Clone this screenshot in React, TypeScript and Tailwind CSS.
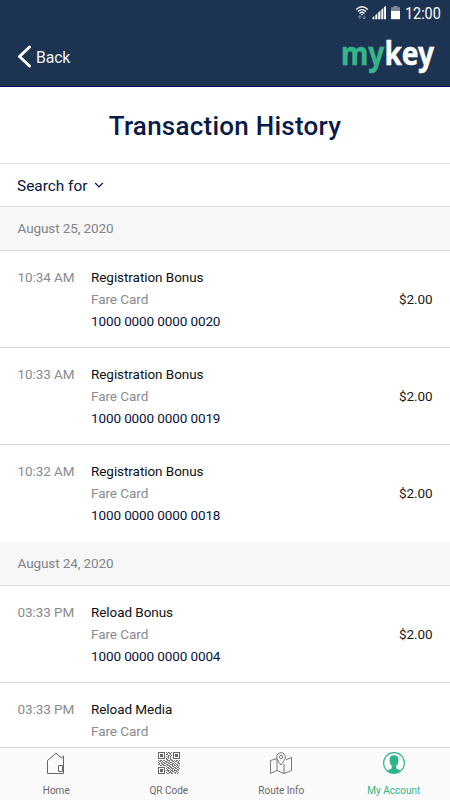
import React from "react";

type Entry = { time: string; title: string; card?: string; amount?: string };

const august25: Entry[] = [
  { time: "10:34 AM", title: "Registration Bonus", card: "1000 0000 0000 0020", amount: "$2.00" },
  { time: "10:33 AM", title: "Registration Bonus", card: "1000 0000 0000 0019", amount: "$2.00" },
  { time: "10:32 AM", title: "Registration Bonus", card: "1000 0000 0000 0018", amount: "$2.00" },
];
const august24: Entry[] = [
  { time: "03:33 PM", title: "Reload Bonus", card: "1000 0000 0000 0004", amount: "$2.00" },
  { time: "03:33 PM", title: "Reload Media" },
];

function StatusIcons() {
  return (
    <svg width="46" height="16" viewBox="0 0 46 16" fill="none">
      <g stroke="#fff" strokeWidth="1.3">
        <path d="M1.2 4.4Q7-1 12.8 4.4" />
        <path d="M2.9 6.5Q7 2.7 11.1 6.5" />
        <path d="M4.5 8.5Q7 6 9.5 8.5" />
      </g>
      <path d="M5.8 9h2.4L7 10.6z" fill="#fff" />
      <path d="M4.8 14V10.5M3.3 12l1.5-1.5L6.3 12M9.2 10.5V14M7.7 12.5 9.2 14l1.5-1.5" stroke="#8290a3" strokeWidth="1" />
      <path d="M17.5 14.2v-1.7l1.8-1.5v3.2zM20.3 14.2v-4l2-1.8v5.8zM23.2 14.2V7.6l2.2-2v8.6zM26.3 14.2V4.8l2-1.8v11.2zM29.1 14.2V2.3L31 .8v13.4z" fill="#fff" />
      <path d="M38.5 1h4v1.2H45V7h-9V2.2h2.5z" fill="#7d8999" />
      <path d="M36 6h9v8.2h-9z" fill="#fff" />
    </svg>
  );
}

function Logo() {
  return (
    <svg width="96" height="46" viewBox="0 0 96 46" className="overflow-visible font-bold">
      <text x="1" y="27.6" fontFamily="Noto Sans, sans-serif" fontSize="31.5" textLength="93" lengthAdjust="spacingAndGlyphs" fill="#37b58a" stroke="#37b58a" strokeWidth="0.5">
        my<tspan fill="#fff" stroke="#fff">key</tspan>
      </text>
    </svg>
  );
}

function HomeIcon() {
  return (
    <svg width="24" height="24" viewBox="0 0 24 24" fill="none" stroke="#666" strokeWidth="1">
      <path d="M3.5 22.5V9.5L12 2.2l5.200 4.600 2.300-1.600v17.300z" />
      <path d="M14.5 14.5h4v6h-4z" />
    </svg>
  );
}

const qrRows = [
  "1111111010110101111111",
  "1000001001011001000001",
  "1011101011001001011101",
  "1011101000110101011101",
  "1011101010101001011101",
  "1000001001101001000001",
  "1111111010101001111111",
  "0000000011001100000000",
  "1011011001110110101101",
  "0110100110010011011010",
  "1001011011101100100110",
  "0101101100110011010011",
  "1100110011001110101100",
  "0011011101110010110101",
  "0000000010011011001010",
  "1111111001101100110110",
  "1000001010110111011001",
  "1011101001001010100110",
  "1011101011110110111010",
  "1011101000101011001100",
  "1000001010011100110010",
  "1111111001100110010100",
];

function isFinder(x: number, y: number) {
  return (y < 7 && (x < 7 || x > 14)) || (y > 14 && x < 7);
}

function QrIcon() {
  return (
    <svg width="24" height="24" viewBox="0 0 24 24">
      {qrRows.flatMap((row, y) =>
        row.split("").map((cell, x) =>
          cell === "1" ? <rect key={`${x}-${y}`} x={x + 1} y={y + 1} width="1" height="1" fill={isFinder(x, y) ? "#666" : "#7a7a7a"} /> : null
        )
      )}
    </svg>
  );
}

function RouteIcon() {
  return (
    <svg width="24" height="24" viewBox="0 0 24 24" fill="none" stroke="#777" strokeWidth="1">
      <path d="M8 7.5 1.5 9.5v13L8 19.5l7 3 7.5-3v-13L17 8.8M8 7.5v12M15 13v9.5" />
      <path d="M12 14C9.5 10.500 7.700 8.600 7.700 6a4.300 4.300 0 0 1 8.600 0C16.300 8.600 14.500 10.500 12 14z" fill="#fafafa" />
      <circle cx="12" cy="6" r="1.6" />
    </svg>
  );
}

function AccountIcon() {
  return (
    <svg width="24" height="24" viewBox="0 0 24 24" fill="none">
      <circle cx="12" cy="12" r="10.4" stroke="#2fb489" strokeWidth="1.1" />
      <path d="M12 4.200c-3 0-4.500 1.900-4.500 4.500 0 2.700.7 4.700 2.200 6.100v2.200c0 1.300-2.900 1.500-4.200 2.500 3.600 3.400 9.400 3.400 13 0-1.300-1-4.200-1.200-4.200-2.500v-2.200c1.500-1.400 2.200-3.400 2.200-6.100 0-2.600-1.500-4.500-4.500-4.500z" fill="#2fb489" />
    </svg>
  );
}

function DateHeader({ children }: { children: React.ReactNode }) {
  return (
    <div className="flex h-11 shrink-0 items-center border-b border-[#dadada] bg-[#f7f7f7] px-[17.5px] text-[13.5px] tracking-[-0.09px] text-[#808388]">
      {children}
    </div>
  );
}

function Row({ entry }: { entry: Entry }) {
  return (
    <div className="flex h-[97px] shrink-0 border-b border-[#dadada] px-[17.5px] pt-[15px] text-[13.5px] leading-[22px] tracking-[-0.06px] last:border-b-0">
      <div className="w-[73.5px] shrink-0 text-[#898b90]">{entry.time}</div>
      <div className="flex-1">
        <div className="text-[#111]">{entry.title}</div>
        <div className="text-[#8b8b8e]">Fare Card</div>
        {entry.card && <div className="tracking-[-0.11px] text-[#08133d]">{entry.card}</div>}
      </div>
      <div className="pt-[22px] text-[#1b1b1b]">{entry.amount}</div>
    </div>
  );
}

const tabs = [
  { label: "Home", icon: <HomeIcon /> },
  { label: "QR Code", icon: <QrIcon /> },
  { label: "Route Info", icon: <RouteIcon /> },
  { label: "My Account", icon: <AccountIcon />, active: true },
];

export default function App() {
  return (
    <div className="flex h-[800px] w-[450px] flex-col overflow-hidden bg-white font-['Roboto',sans-serif]">
      <header className="h-[87px] shrink-0 border-b border-[#05054d] bg-[#1d3352]">
        <div className="flex h-[26px] items-start justify-end gap-[4px] pt-[5px] pr-[9px]">
          <StatusIcons />
          <span className="block w-[36px] text-[16.5px] leading-[17px] text-white"><span className="inline-block origin-left scale-x-[0.87]">12:00</span></span>
        </div>
        <div className="flex items-start justify-between pr-[14px] pl-[17px]">
          <div className="flex h-[62px] items-center gap-[4px] text-[15.8px] tracking-[-0.15px] text-[#f1f3f5]">
            <svg width="15" height="24" viewBox="0 0 15 24" fill="none" stroke="#fff" strokeWidth="3" strokeLinecap="round" strokeLinejoin="round">
              <path d="M12.5 2 2.5 11.5l10 9.5" />
            </svg>
            <span className="pt-[2px]">Back</span>
          </div>
          <div className="pt-[11px]"><Logo /></div>
        </div>
      </header>
      <div className="flex h-[77px] shrink-0 items-center justify-center border-b border-[#dfdfdf] pt-[3px]">
        <h1 className="text-[26px] font-medium tracking-[0.25px] text-[#0a1b47]">Transaction History</h1>
      </div>
      <div className="flex h-[43px] shrink-0 items-center gap-[7px] border-b border-[#dadada] pl-[17px] text-[15.4px] text-[#08133d]">
        <span className="pt-[3px]">Search for</span>
        <svg width="10" height="8" viewBox="0 0 10 8" fill="none" stroke="#08133d" strokeWidth="1.2">
          <path d="m1.2 2 3.8 3.8 3.8-3.8" />
        </svg>
      </div>
      <main className="min-h-0 flex-1 overflow-hidden">
        <DateHeader>August 25, 2020</DateHeader>
        <div>{august25.map((e) => <Row key={e.time} entry={e} />)}</div>
        <DateHeader>August 24, 2020</DateHeader>
        <div>{august24.map((e) => <Row key={e.title} entry={e} />)}</div>
      </main>
      <nav className="grid h-[53px] shrink-0 grid-cols-4 border-t border-[#d8d8d8] bg-[#fafafa]">
        {tabs.map((t) => (
          <div key={t.label} className={`flex flex-col items-center pt-[3px] text-[10px] leading-[12px] ${t.active ? "text-[#2fb489]" : "text-[#68686a]"}`}>
            {t.icon}
            <span className="mt-[10px]">{t.label}</span>
          </div>
        ))}
      </nav>
    </div>
  );
}
